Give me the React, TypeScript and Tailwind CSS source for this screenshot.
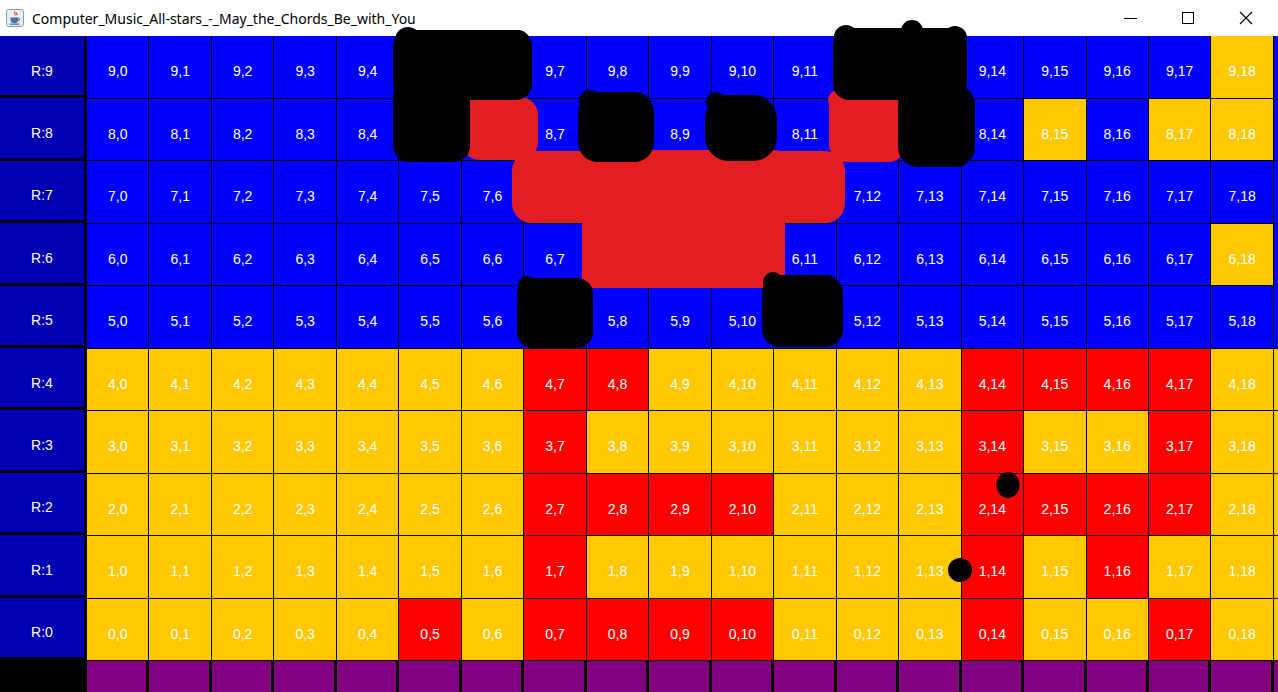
import React from "react";

const ROWS = [9, 8, 7, 6, 5, 4, 3, 2, 1, 0];
const COLS = Array.from({ length: 20 }, (_, i) => i);

// top half is blue with a few orange cells, bottom half orange with red notes
const orangeTop: Record<number, number[]> = {
  9: [18],
  8: [15, 17, 18],
  7: [],
  6: [18],
  5: [],
};
const redBottom: Record<number, number[]> = {
  4: [7, 8, 14, 15, 16, 17],
  3: [7, 14, 17],
  2: [7, 8, 9, 10, 14, 15, 16, 17],
  1: [7, 14, 16],
  0: [5, 7, 8, 9, 10, 14, 17],
};

function cellColor(r: number, c: number) {
  if (r >= 5) {
    return orangeTop[r].includes(c) ? "bg-[#ffc800]" : "bg-[#0000ff]";
  }
  return redBottom[r].includes(c) ? "bg-[#ff0000]" : "bg-[#ffc800]";
}

function JavaIcon() {
  return (
    <svg width="18" height="18" viewBox="0 0 18 18">
      <rect x="0.5" y="0.5" width="17" height="17" rx="2" fill="#e9eef5" stroke="#8a9bb2" />
      <path d="M9 2.5c-1.5 1.5 1.2 2.3 0 4 M10.8 3.5c-1 1 .8 1.6 0 2.8" stroke="#e0561b" strokeWidth="1.2" fill="none" />
      <path d="M4.5 8.5h8v2.5c0 2-1.8 3.2-4 3.2s-4-1.2-4-3.2z" fill="#4a6fa5" />
      <path d="M12.5 9.2c1.6 0 1.6 2.2 0 2.2" stroke="#4a6fa5" strokeWidth="1" fill="none" />
      <rect x="3.5" y="14.6" width="10" height="1.2" rx="0.6" fill="#4a6fa5" />
    </svg>
  );
}

function TitleBar() {
  return (
    <div className="h-[36px] bg-white flex items-center shrink-0">
      <div className="pl-[6px] pr-[8px] flex items-center">
        <JavaIcon />
      </div>
      <span className="text-[14px] text-black font-['Noto_Sans',sans-serif]">
        Computer_Music_All-stars_-_May_the_Chords_Be_with_You
      </span>
      <div className="ml-auto flex h-full pr-[3px]">
        <div className="w-[58px] flex items-center justify-center">
          <div className="w-[13px] h-px bg-black" />
        </div>
        <div className="w-[58px] flex items-center justify-center">
          <div className="w-[12px] h-[12px] border border-black" />
        </div>
        <div className="w-[58px] flex items-center justify-center">
          <svg width="14" height="14" viewBox="0 0 14 14">
            <path d="M1 1L13 13M13 1L1 13" stroke="#000" strokeWidth="1.1" />
          </svg>
        </div>
      </div>
    </div>
  );
}

// paint-over drawn on top of the window
function Scribbles() {
  return (
    <svg className="absolute inset-0 pointer-events-none" width="1278" height="692" viewBox="0 0 1278 692">
      <g fill="#e31e20">
        <rect x="462" y="97" width="76" height="63" rx="18" />
        <rect x="512" y="151" width="333" height="72" rx="20" />
        <rect x="582" y="150" width="203" height="138" rx="10" />
        <rect x="829" y="90" width="77" height="72" rx="18" />
        <circle cx="838" cy="100" r="10" />
      </g>
      <g fill="#000">
        <rect x="393" y="30" width="139" height="70" rx="16" />
        <rect x="393" y="80" width="77" height="82" rx="16" />
        <circle cx="408" cy="40" r="13" />
        <circle cx="518" cy="42" r="12" />
        <rect x="578" y="92" width="76" height="70" rx="20" />
        <circle cx="590" cy="101" r="11" />
        <rect x="705" y="95" width="72" height="66" rx="24" />
        <circle cx="716" cy="102" r="10" />
        <rect x="517" y="278" width="76" height="70" rx="16" />
        <circle cx="527" cy="285" r="9" />
        <rect x="762" y="275" width="81" height="72" rx="18" />
        <circle cx="773" cy="282" r="10" />
        <rect x="833" y="28" width="134" height="72" rx="16" />
        <circle cx="846" cy="37" r="12" />
        <circle cx="912" cy="31" r="11" />
        <circle cx="955" cy="38" r="12" />
        <rect x="898" y="85" width="77" height="82" rx="20" />
        <ellipse cx="1008" cy="485" rx="11.5" ry="13" />
        <ellipse cx="960" cy="570" rx="12" ry="12" />
      </g>
    </svg>
  );
}

export default function App() {
  return (
    <div className="relative w-[1278px] h-[692px] overflow-hidden bg-black flex flex-col font-['Liberation_Sans',Arial,sans-serif]">
      <TitleBar />
      <div className="flex-1 bg-black overflow-hidden">
        <div className="flex">
          {/* row labels */}
          <div className="w-[84px] flex flex-col gap-[3px] shrink-0">
            {ROWS.map((r) => (
              <div
                key={r}
                className="h-[59.4px] bg-[#0000b2] text-white text-[14px] flex items-center justify-center pt-[11px]"
              >
                R:{r}
              </div>
            ))}
          </div>
          {/* note grid, last column only peeks in at the window edge */}
          <div className="ml-[3px] grid grid-cols-[repeat(20,61.47px)] grid-rows-[repeat(10,61.5px)] gap-px shrink-0">
            {ROWS.map((r) =>
              COLS.map((c) => (
                <div
                  key={r + "-" + c}
                  className={
                    cellColor(r, c) +
                    " text-white text-[14px] flex items-center justify-center pt-[10px]"
                  }
                >
                  {c < 19 ? `${r},${c}` : ""}
                </div>
              ))
            )}
          </div>
        </div>
        {/* bottom strip */}
        <div className="flex mt-px">
          <div className="w-[87px] h-[32px] bg-black shrink-0" />
          <div className="flex gap-[3px]">
            {COLS.map((c) => (
              <div key={c} className="w-[59.47px] h-[32px] bg-[#800080] shrink-0" />
            ))}
          </div>
        </div>
      </div>
      <Scribbles />
    </div>
  );
}
